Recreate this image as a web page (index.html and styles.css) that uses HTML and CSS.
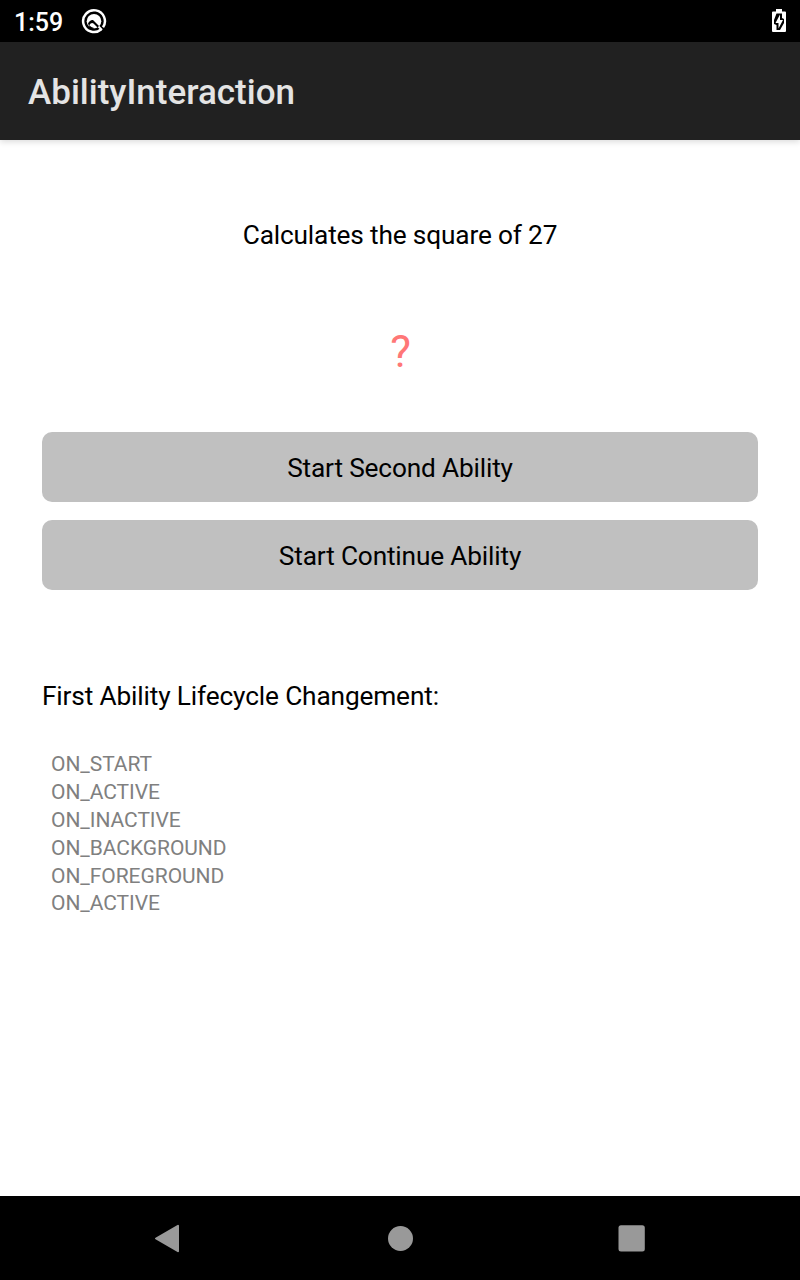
FILE: index.html
```html
<!DOCTYPE html>
<html lang="en">
<head>
<meta charset="utf-8">
<title>AbilityInteraction</title>
<link rel="stylesheet" href="styles.css">
</head>
<body>
<header class="status">
  <span class="clock">1:59</span>
  <svg class="status-app" viewBox="0 0 26 26"><path d="M20 21.500A10.900 10.900 0 1 1 22 19.300" fill="none" stroke="#fff" stroke-width="2.500"/><circle cx="13" cy="13.200" r="7.300" fill="#fff"/><path d="M7 15.500Q9 11.500 12 12L18.500 18.500L15.500 20.500H9z" fill="#000"/><path d="M8.200 17.300Q10.500 13.800 12.500 15.500L16.500 19.500Q12 21.500 8.200 17.300z" fill="#fff"/><path d="M17.500 18.500l3.500 3.500" stroke="#fff" stroke-width="2"/></svg>
  <svg class="battery" viewBox="0 0 16 24"><path d="M5 0h6v2.500h3q1 0 1 1V22q0 1-1 1H2q-1 0-1-1V3.500q0-1 1-1h3z" fill="#fff"/><path d="M5.500 4.500H11V9l2 1v4l-4 7H5.500v-5L3 15v-4z" fill="#000"/><path d="M9 5.500L4.500 14h3v5.500l4.500-8.500H9z" fill="#fff"/></svg>
</header>
<div class="appbar"><h1 class="title">AbilityInteraction</h1></div>
<main class="content">
  <p class="prompt">Calculates the square of 27</p>
  <p class="result">?</p>
  <div class="actions">
    <button class="action">Start Second Ability</button>
    <button class="action">Start Continue Ability</button>
  </div>
  <h2 class="subtitle">First Ability Lifecycle Changement:</h2>
  <ul class="log">
    <li>ON_START</li><li>ON_ACTIVE</li><li>ON_INACTIVE</li><li>ON_BACKGROUND</li><li>ON_FOREGROUND</li><li>ON_ACTIVE</li>
  </ul>
</main>
<nav class="navbar">
  <svg class="nav-icon" viewBox="0 0 30 30"><path d="M2 15.500L24 2.800v25.400z" fill="#999" stroke="#999" stroke-width="2" stroke-linejoin="round"/></svg>
  <svg class="nav-icon" viewBox="0 0 30 30"><circle cx="15.500" cy="15.500" r="12.500" fill="#999"/></svg>
  <svg class="nav-icon" viewBox="0 0 30 30"><rect x="1.500" y="2.300" width="26.300" height="26.300" rx="2.500" fill="#999"/></svg>
</nav>
</body>
</html>
```
FILE: styles.css
```css
* { box-sizing: border-box; margin: 0; padding: 0; }
body { display: flex; flex-direction: column; width: 800px; height: 1280px; background: #fff; color: #000; font-family: Roboto, sans-serif; }
.status { display: flex; align-items: center; height: 42px; padding: 0 13px 0 14px; background: #000; color: #fff; }
.clock { width: 49px; padding-top: 3px; font-size: 25px; font-weight: 500; line-height: 42px; }
.status-app { width: 26px; height: 26px; margin-left: 18px; }
.battery { width: 16px; height: 24px; margin-left: auto; }
.appbar { height: 98px; padding-left: 28px; background: #212121; box-shadow: 0 2px 6px rgba(0,0,0,.14); }
.title { color: #e4e4e4; font-size: 35px; font-weight: 500; line-height: 101px; }
.content { flex: 1; padding: 75px 42px 0; }
.prompt { font-size: 26.250px; letter-spacing: -.17px; line-height: 40px; text-align: center; }
.result { margin-top: 67px; padding-left: 1px; color: #ff7777; font-size: 43.750px; line-height: 60px; text-align: center; }
.actions { display: grid; gap: 18px; margin-top: 50px; }
.action { height: 70px; padding-top: 2px; border: 0; border-radius: 10px; background: #c0c0c0; color: #000; font: 26.250px Roboto, sans-serif; letter-spacing: -.17px; }
.subtitle { margin-top: 86px; font-size: 26.250px; font-weight: 400; letter-spacing: -.15px; line-height: 40px; }
.log { margin: 35.400px 0 0 9px; color: #808080; font-size: 21px; letter-spacing: -.05px; line-height: 27.800px; list-style: none; }
.navbar { display: flex; justify-content: center; align-items: center; gap: 201.500px; height: 84px; background: #000; }
.nav-icon { width: 30px; height: 30px; }
```
